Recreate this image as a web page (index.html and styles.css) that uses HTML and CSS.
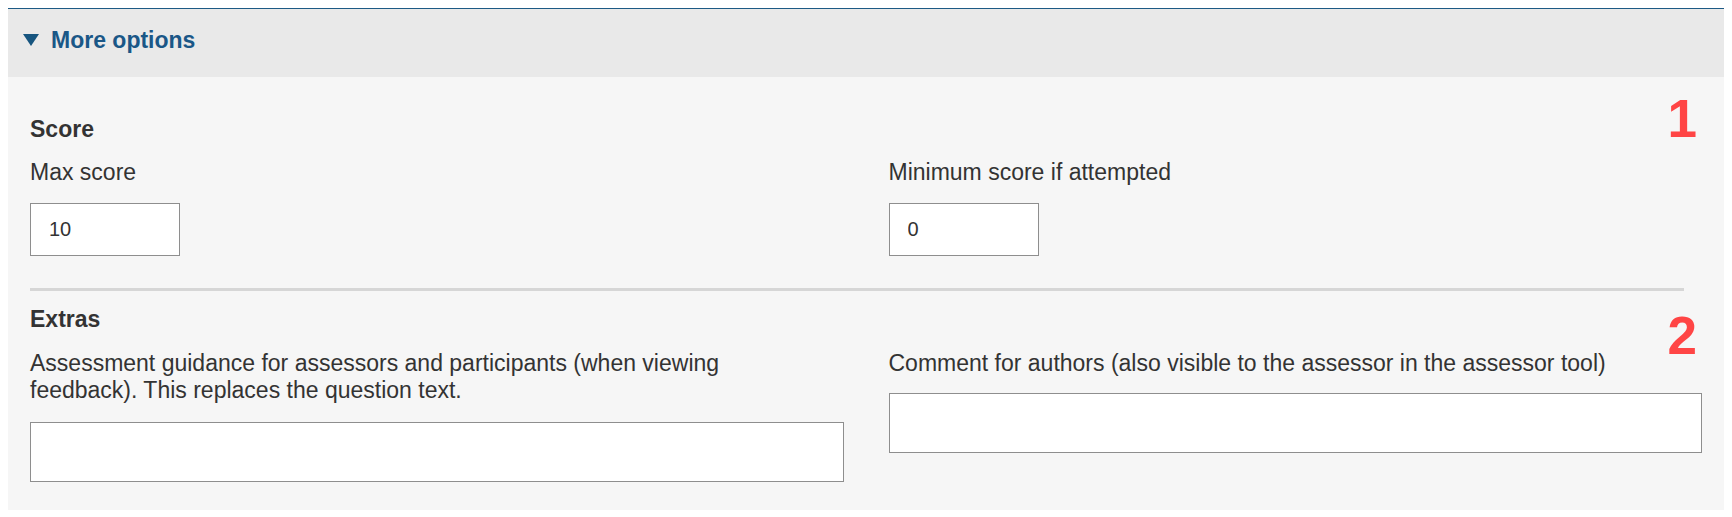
FILE: index.html
```html
<!DOCTYPE html>
<html lang="en">
<head>
<meta charset="utf-8">
<title>More options</title>
<link rel="stylesheet" href="styles.css">
</head>
<body>
<div class="panel">
  <div class="panel-header">
    <svg class="caret" width="16" height="12" viewBox="0 0 16 12" aria-hidden="true"><polygon points="0,0 16,0 8,12" fill="#17557f"/></svg>
    <span class="panel-title">More options</span>
  </div>
  <div class="panel-body">
    <section class="section">
      <h3 class="section-title">Score</h3>
      <div class="cols">
        <div class="field">
          <label class="field-label" for="max">Max score</label>
          <input class="num-input" id="max" type="text" value="10">
        </div>
        <div class="field">
          <label class="field-label" for="min">Minimum score if attempted</label>
          <input class="num-input" id="min" type="text" value="0">
        </div>
      </div>
    </section>
    <hr class="divider">
    <section class="section">
      <h3 class="section-title extras-title">Extras</h3>
      <div class="cols">
        <div class="field">
          <label class="field-label narrow" for="guide">Assessment guidance for assessors and participants (when viewing feedback). This replaces the question text.</label>
          <textarea class="area" id="guide"></textarea>
        </div>
        <div class="field">
          <label class="field-label single" for="comment">Comment for authors (also visible to the assessor in the assessor tool)</label>
          <textarea class="area" id="comment"></textarea>
        </div>
      </div>
    </section>
    <span class="marker marker-1">1</span>
    <span class="marker marker-2">2</span>
  </div>
</div>
</body>
</html>
```
FILE: styles.css
```css
body {
  margin: 8px;
  font-family: "Liberation Sans", Arial, sans-serif;
  color: #333333;
  background: #ffffff;
}

.panel {
  position: relative;
  background: #f6f6f6;
  border-top: 1px solid #1d5a85;
}

.panel-header {
  display: flex;
  align-items: center;
  gap: 12px;
  padding: 18px 15px 22.5px;
  background: #e9e9e9;
}

.caret {
  display: block;
  margin-top: -2px;
}

.panel-title {
  font-size: 23px;
  font-weight: bold;
  color: #1a5787;
  line-height: normal;
}

.panel-body {
  padding: 39px 22px 28px;
}

.section-title {
  margin: 0 0 16.5px;
  font-size: 23px;
  font-weight: bold;
  line-height: normal;
  color: #333333;
}

.extras-title {
  margin-bottom: 17.5px;
}

.cols {
  display: grid;
  grid-template-columns: 1fr 1fr;
  column-gap: 45px;
  align-items: start;
}

.field {
  display: flex;
  flex-direction: column;
  align-items: flex-start;
}

.field-label {
  display: block;
  font-size: 23px;
  line-height: normal;
  margin-bottom: 17px;
}

.field-label.narrow {
  max-width: 760px;
  margin-bottom: 17.5px;
}

.field-label.single {
  margin-bottom: 16px;
}

.num-input {
  box-sizing: border-box;
  width: 150px;
  height: 53px;
  margin: 0;
  padding: 0 18px;
  border: 1px solid #8e8e8e;
  border-radius: 0;
  background: #ffffff;
  font-family: "Liberation Sans", Arial, sans-serif;
  font-size: 20px;
  color: #333333;
}

.area {
  box-sizing: border-box;
  display: block;
  width: 100%;
  height: 60px;
  margin: 0;
  border: 1px solid #8e8e8e;
  border-radius: 0;
  background: #ffffff;
  resize: none;
  font-family: "Liberation Sans", Arial, sans-serif;
  font-size: 20px;
}

.divider {
  margin: 32px 18px 14.5px 0;
  height: 3px;
  border: 0;
  background: #d6d6d6;
}

.marker {
  position: absolute;
  right: 27px;
  font-size: 53px;
  font-weight: bold;
  line-height: 53px;
  color: #ff4545;
}

.marker-1 {
  top: 83px;
}

.marker-2 {
  top: 300px;
}
```
